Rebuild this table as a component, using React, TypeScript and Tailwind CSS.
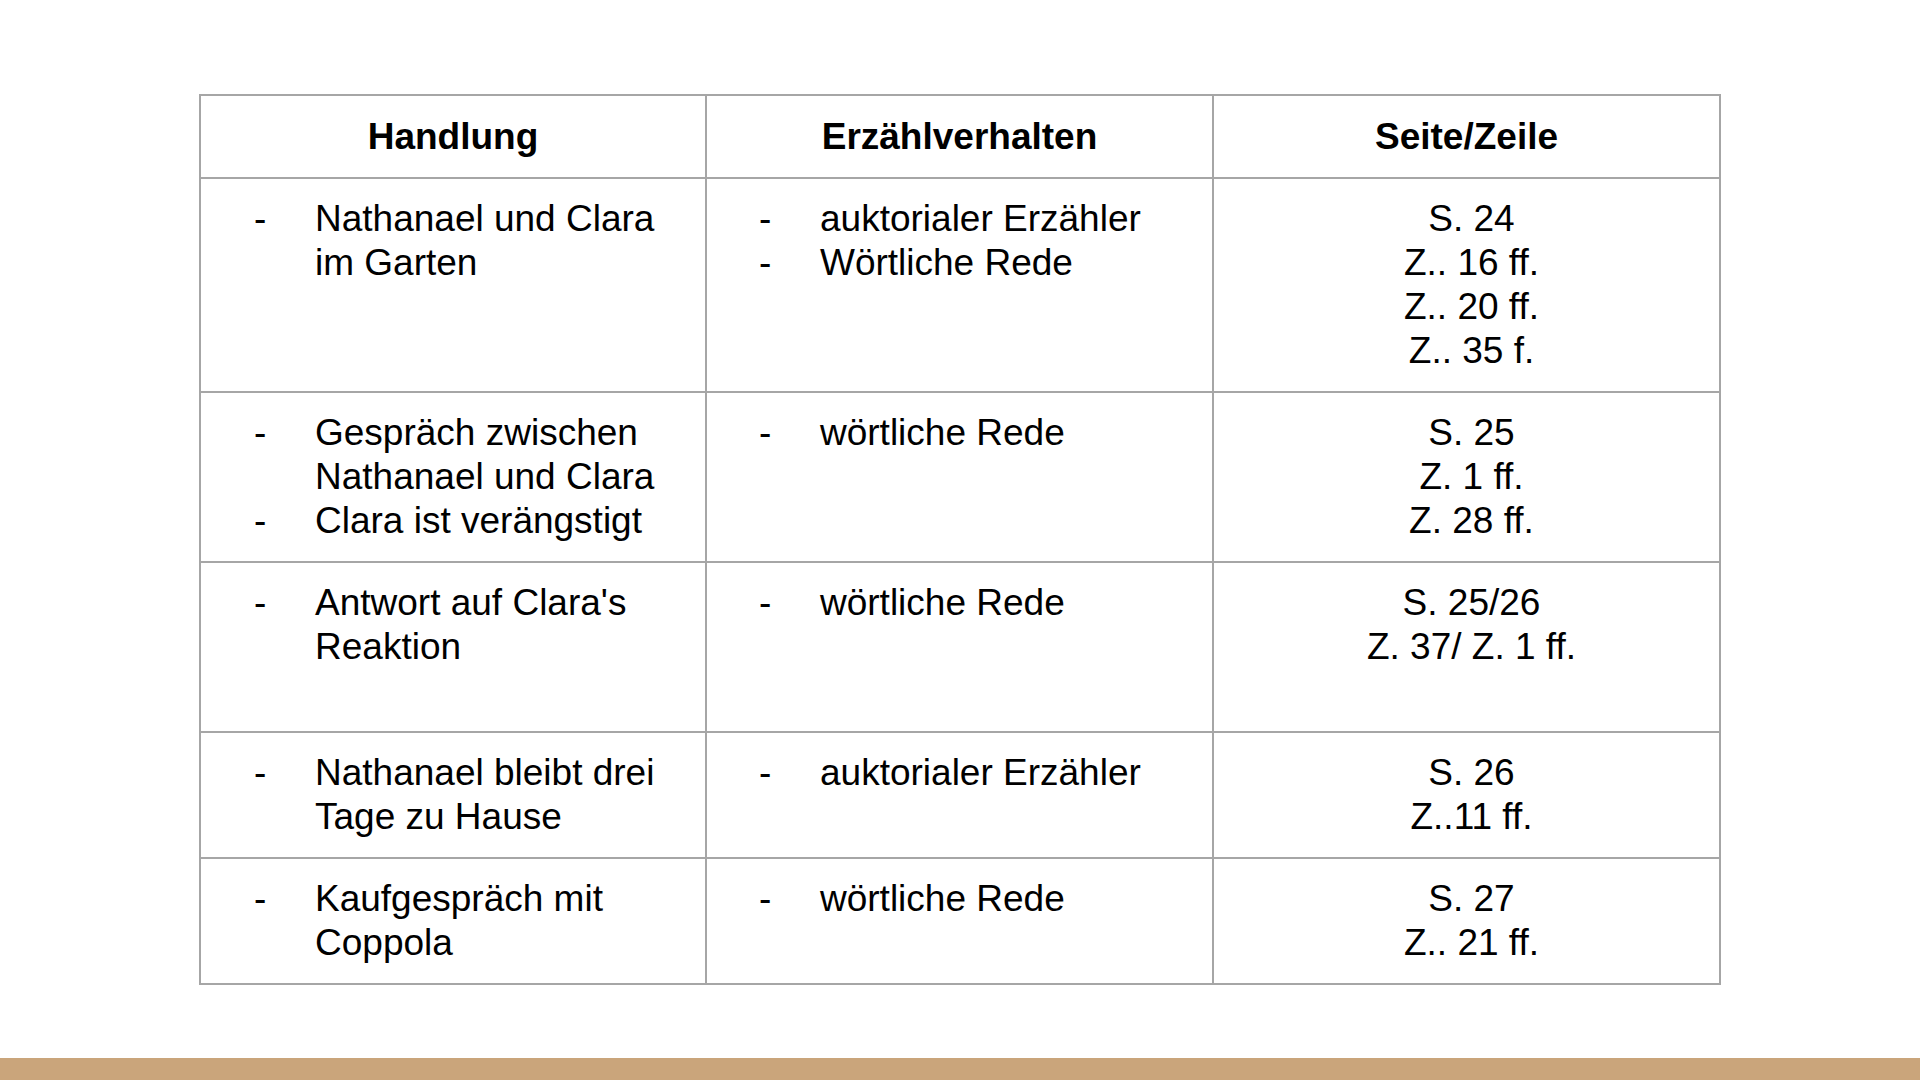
import React from "react";

type Row = {
  handlung: string[];
  erz: string[];
  seite: string[];
};

const rows: Row[] = [
  {
    handlung: ["Nathanael und Clara im Garten"],
    erz: ["auktorialer Erzähler", "Wörtliche Rede"],
    seite: ["S. 24", "Z.. 16 ff.", "Z.. 20 ff.", "Z.. 35 f."],
  },
  {
    handlung: ["Gespräch zwischen Nathanael und Clara", "Clara ist verängstigt"],
    erz: ["wörtliche Rede"],
    seite: ["S. 25", "Z. 1 ff.", "Z. 28 ff."],
  },
  {
    handlung: ["Antwort auf Clara's Reaktion"],
    erz: ["wörtliche Rede"],
    seite: ["S. 25/26", "Z. 37/ Z. 1 ff.", "\u00a0"],
  },
  {
    handlung: ["Nathanael bleibt drei Tage zu Hause"],
    erz: ["auktorialer Erzähler"],
    seite: ["S. 26", "Z..11 ff."],
  },
  {
    handlung: ["Kaufgespräch mit Coppola"],
    erz: ["wörtliche Rede"],
    seite: ["S. 27", "Z.. 21 ff."],
  },
];

function Bullets({ items }: { items: string[] }) {
  return (
    <div className="flex flex-col">
      {items.map((t, i) => (
        <div key={i} className="flex">
          <span className="w-[61px] shrink-0">-</span>
          <span className="pr-[14px]">{t}</span>
        </div>
      ))}
    </div>
  );
}

export default function App() {
  return (
    <div
      className="flex h-screen w-full flex-col bg-white text-black"
      style={{ fontFamily: '"Liberation Sans", Arial, sans-serif' }}
    >
      <div className="flex-1">
        <div className="ml-[199px] mt-[94px] w-[1522px] border-2 border-[#a6a6a6] text-[37px] leading-[44px]">
          <div className="grid grid-cols-[504px_507px_507px]">
            <div className="flex h-[81px] items-center justify-center font-bold">Handlung</div>
            <div className="flex h-[81px] items-center justify-center border-l-2 border-[#a6a6a6] font-bold">
              Erzählverhalten
            </div>
            <div className="flex h-[81px] items-center justify-center border-l-2 border-[#a6a6a6] font-bold">
              Seite/Zeile
            </div>
          </div>
          {rows.map((r, i) => (
            <div key={i} className="grid grid-cols-[504px_507px_507px] border-t-2 border-[#a6a6a6]">
              <div className="py-[18px] pl-[53px]">
                <Bullets items={r.handlung} />
              </div>
              <div className="border-l-2 border-[#a6a6a6] py-[18px] pl-[52px]">
                <Bullets items={r.erz} />
              </div>
              <div className="flex flex-col items-center border-l-2 border-[#a6a6a6] py-[18px] pl-[10px]">
                {r.seite.map((s, j) => (
                  <div key={j}>{s}</div>
                ))}
              </div>
            </div>
          ))}
        </div>
      </div>
      <div className="h-[22px] w-full bg-[#caa57b]" />
    </div>
  );
}
